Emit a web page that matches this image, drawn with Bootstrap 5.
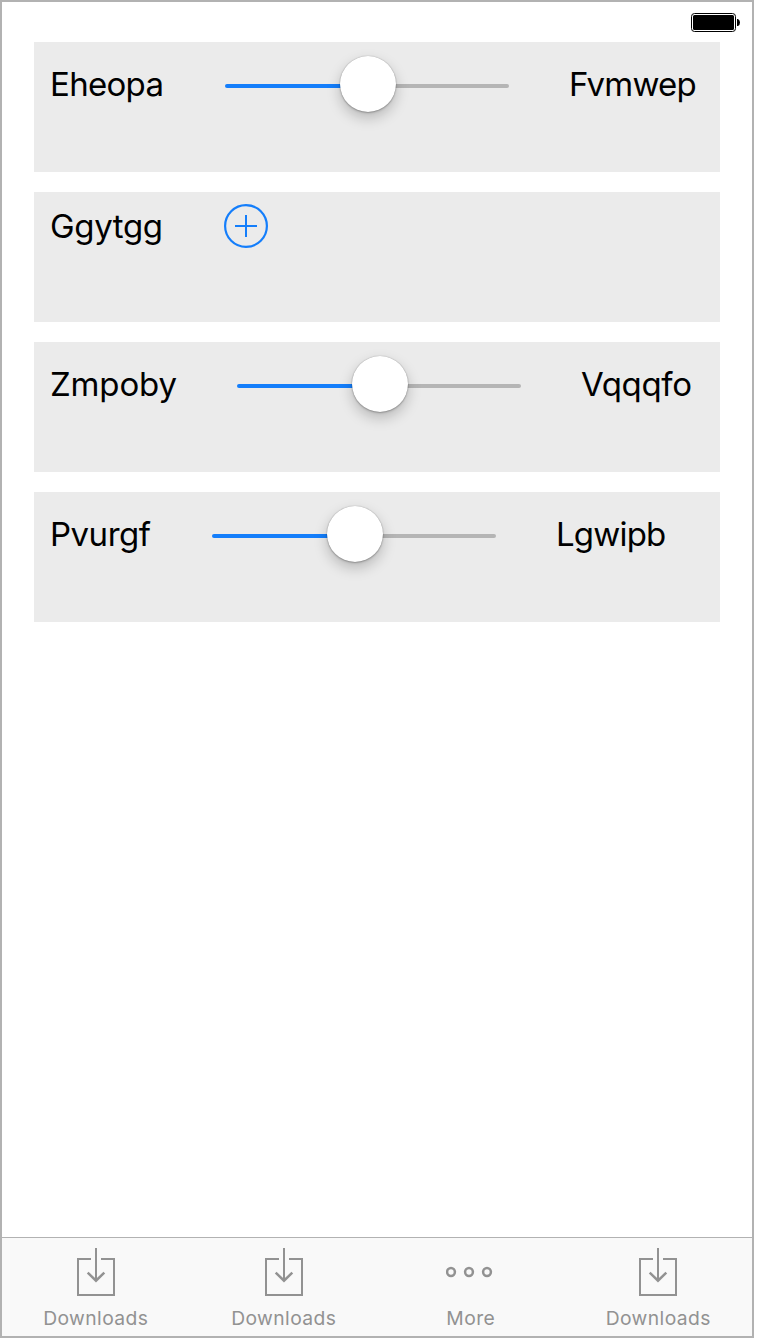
<!DOCTYPE html>
<html lang="en">
<head>
<meta charset="utf-8">
<meta name="viewport" content="width=device-width, initial-scale=1">
<title>Controls</title>
<link href="https://cdn.jsdelivr.net/npm/bootstrap@5.3.0/dist/css/bootstrap.min.css" rel="stylesheet">
<style>
body { font-family: Inter, "Liberation Sans", sans-serif; color: #000; background: #fff; overflow: hidden; }
.phone { width: 754px; height: 1338px; border: 2px solid #b2b2b2; }
.status { height: 40px; padding: 10px 11px 0 0; }
.list { padding: 0 32px; gap: 20px; }
.panel { height: 130px; background: #ebebeb; padding-left: 16px; }
.line { height: 84px; }
.line-short { height: 68px; }
.label { font-size: 33px; line-height: 40px; white-space: nowrap; }
.w-a { width: 175px; letter-spacing: -.7px; }
.w-b { width: 174px; letter-spacing: -.35px; }
.w-c { width: 187px; letter-spacing: -.15px; }
.w-d { width: 162px; letter-spacing: -.5px; }
.value { margin-left: 60px; letter-spacing: -.35px; }
.value-tight { letter-spacing: -.8px; }
.slider { width: 284px; height: 56px; }
.track { height: 4px; margin-top: 4px; border-radius: 2px; background: linear-gradient(90deg, #147efb 50%, #b5b5b5 50%); }
.thumb { left: 115px; top: 0; width: 56px; height: 56px; border-radius: 50%; background: #fff; box-shadow: 0 0 1px rgba(0,0,0,.35), 0 1px 2px rgba(0,0,0,.25), 0 6px 14px rgba(0,0,0,.22); }
.tabs { height: 99px; border-top: 1px solid #b2b2b2; background: #f9f9f9; color: #929292; }
.tab-item { padding-top: 10px; }
.tab-shift { padding-left: 1px; }
.tab-text { font-size: 19.3px; line-height: 24px; letter-spacing: .4px; margin-top: 10px; }
</style>
</head>
<body>
<div class="phone d-flex flex-column">
  <header class="status d-flex justify-content-end flex-shrink-0">
    <svg width="50" height="20" viewBox="0 0 50 20"><rect x=".5" y="1.5" width="44" height="18" rx="3" fill="none" stroke="#000"/><rect x="2" y="3" width="41" height="15" rx="1.5"/><path d="M46 7h1q2 1 2 3.500t-2 3.500h-1z"/></svg>
  </header>
  <main class="list d-flex flex-column flex-grow-1">
    <section class="panel">
      <div class="line d-flex align-items-center">
        <span class="label w-a">Eheopa</span>
        <div class="slider position-relative d-flex align-items-center"><div class="track w-100"></div><div class="thumb position-absolute"></div></div>
        <span class="label value value-tight">Fvmwep</span>
      </div>
    </section>
    <section class="panel">
      <div class="line-short d-flex align-items-center">
        <span class="label w-b">Ggytgg</span>
        <svg width="44" height="44" viewBox="0 0 44 44" fill="none" stroke="#147efb" stroke-width="2.2"><circle cx="22" cy="22" r="20.900"/><path stroke-width="2" d="M11 22h22M22 11v22"/></svg>
      </div>
    </section>
    <section class="panel">
      <div class="line d-flex align-items-center">
        <span class="label w-c">Zmpoby</span>
        <div class="slider position-relative d-flex align-items-center"><div class="track w-100"></div><div class="thumb position-absolute"></div></div>
        <span class="label value">Vqqqfo</span>
      </div>
    </section>
    <section class="panel">
      <div class="line d-flex align-items-center">
        <span class="label w-d">Pvurgf</span>
        <div class="slider position-relative d-flex align-items-center"><div class="track w-100"></div><div class="thumb position-absolute"></div></div>
        <span class="label value value-tight">Lgwipb</span>
      </div>
    </section>
  </main>
  <nav class="tabs d-flex flex-shrink-0">
    <div class="tab-item flex-fill w-25 d-flex flex-column align-items-center">
      <svg width="38" height="48" viewBox="0 0 38 48" fill="none" stroke="currentColor" stroke-width="2"><path d="M14 11H1v36h36V11H24M19 0v33"/><path stroke-width="2.500" d="M10.700 24.700l8.300 8 8.300-8"/></svg>
      <span class="tab-text">Downloads</span>
    </div>
    <div class="tab-item tab-shift flex-fill w-25 d-flex flex-column align-items-center">
      <svg width="38" height="48" viewBox="0 0 38 48" fill="none" stroke="currentColor" stroke-width="2"><path d="M14 11H1v36h36V11H24M19 0v33"/><path stroke-width="2.500" d="M10.700 24.700l8.300 8 8.300-8"/></svg>
      <span class="tab-text">Downloads</span>
    </div>
    <div class="tab-item flex-fill w-25 d-flex flex-column align-items-center">
      <svg width="50" height="48" viewBox="0 0 50 48" fill="none" stroke="currentColor" stroke-width="2.500"><circle cx="5" cy="24" r="3.900"/><circle cx="23" cy="24" r="3.900"/><circle cx="41" cy="24" r="3.900"/></svg>
      <span class="tab-text">More</span>
    </div>
    <div class="tab-item flex-fill w-25 d-flex flex-column align-items-center">
      <svg width="38" height="48" viewBox="0 0 38 48" fill="none" stroke="currentColor" stroke-width="2"><path d="M14 11H1v36h36V11H24M19 0v33"/><path stroke-width="2.500" d="M10.700 24.700l8.300 8 8.300-8"/></svg>
      <span class="tab-text">Downloads</span>
    </div>
  </nav>
</div>
<script src="https://cdn.jsdelivr.net/npm/bootstrap@5.3.0/dist/js/bootstrap.bundle.min.js"></script>
</body>
</html>
